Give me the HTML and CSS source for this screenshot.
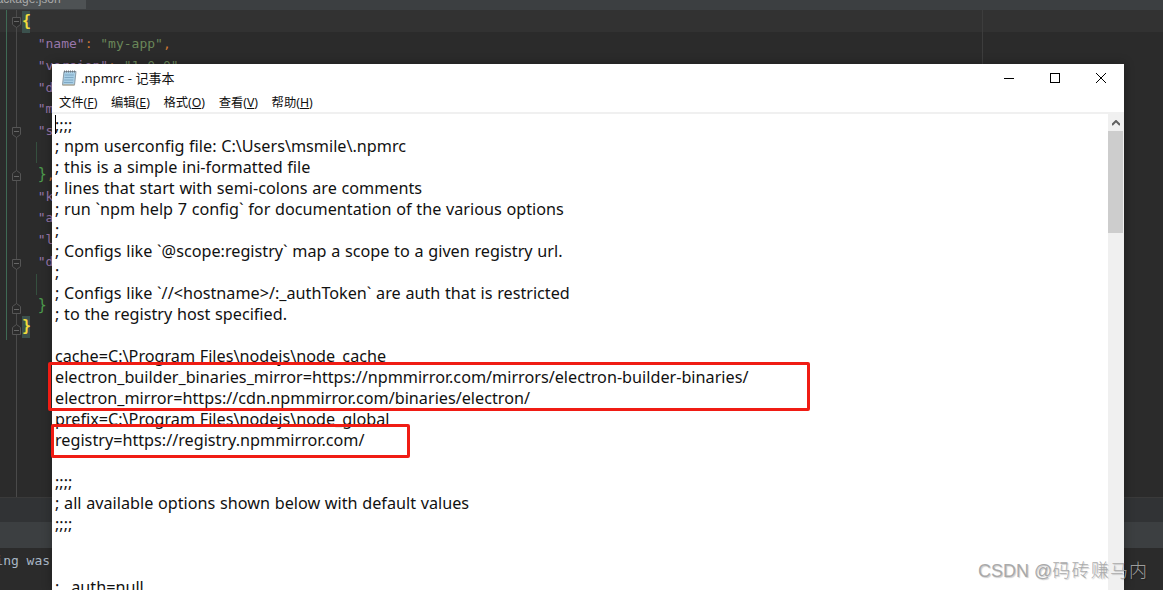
FILE: index.html
```html
<!DOCTYPE html>
<html lang="zh-CN">
<head>
<meta charset="utf-8">
<title>.npmrc - 记事本</title>
<link rel="stylesheet" href="styles.css">
</head>
<body>
<div class="ide">
  <div class="ide-tabs"><div class="ide-tab">package.json</div></div>
  <div class="ide-main">
    <svg class="gutter" viewBox="0 0 40 487" width="40" height="487">
      <path d="M6.5 0V330" stroke="#3f6a55"/>
      <path d="M16.5 0V487" stroke="#4a4a4a"/>
      <path d="M36.5 132v21M36.5 264v21" stroke="#35503f"/>
      <g fill="#2b2b2b" stroke="#555">
        <path d="M12.5 7.5h8v7l-4 3-4-3z"/>
        <path d="M12.5 117.5h8v7l-4 3-4-3z"/>
        <path d="M12.5 170.5v-7l4-3 4 3v7z"/>
        <path d="M12.5 249.5h8v7l-4 3-4-3z"/>
        <path d="M12.5 303.5v-7l4-3 4 3v7z"/>
        <path d="M12.5 324.5v-7l4-3 4 3v7z"/>
      </g>
      <path d="M14 11.5h5M14 121.5h5M14 166.5h5M14 253.5h5M14 299.5h5M14 320.5h5" stroke="#666"/>
    </svg>
    <pre class="code"><span class="brace brace-hl">{</span>
  <span class="key">"name"</span><span class="colon">:</span> <span class="str">"my-app"</span><span class="colon">,</span>
  <span class="key">"version"</span><span class="colon">:</span> <span class="str">"1.0.0"</span><span class="colon">,</span>
  <span class="key">"description"</span>
  <span class="key">"main"</span>
  <span class="key">"scripts"</span>

  <span class="green">}</span><span class="colon">,</span>
  <span class="key">"keywords"</span>
  <span class="key">"author"</span>
  <span class="key">"license"</span>
  <span class="key">"dependencies"</span>

  <span class="green">}</span>
<span class="brace brace-hl">}</span></pre>
  </div>
  <div class="ide-panel-a"></div>
  <div class="ide-panel-b"></div>
  <pre class="ide-log">Nothing was</pre>
</div>

<div class="notepad">
  <div class="np-title">
    <svg class="np-icon" viewBox="0 0 18 18" width="18" height="18">
      <path d="M4 2.5h12l-1.5 13.5h-12z" fill="#a9cfe6" stroke="#8b9aa5"/>
      <path d="M4 2.5h12" stroke="#6d7780" stroke-width="2" stroke-dasharray="1 1"/>
      <path d="M4.8 6h9M4.5 8.5h9M4.2 11h9M3.9 13.5h9" stroke="#7fa8c4"/>
      <path d="M2.5 16h12" stroke="#b8a98c"/>
    </svg>
    <span class="np-name">.npmrc - 记事本</span>
    <div class="np-controls">
      <svg viewBox="0 0 46 27" width="46" height="27"><path d="M18 14.5h10" stroke="#000"/></svg>
      <svg viewBox="0 0 46 27" width="46" height="27"><rect x="18.5" y="9.5" width="9" height="9" fill="none" stroke="#000"/></svg>
      <svg viewBox="0 0 46 27" width="46" height="27"><path d="M18 9l10 10M28 9l-10 10" stroke="#000"/></svg>
    </div>
  </div>
  <div class="np-menu">
    <span>文件(<u>F</u>)</span><span>编辑(<u>E</u>)</span><span>格式(<u>O</u>)</span><span>查看(<u>V</u>)</span><span>帮助(<u>H</u>)</span>
  </div>
  <div class="np-body">
    <div class="np-text">
<pre class="np-pre">;;;;
; npm userconfig file: C:\Users\msmile\.npmrc
; this is a simple ini-formatted file
; lines that start with semi-colons are comments
; run `npm help 7 config` for documentation of the various options
;
; Configs like `@scope:registry` map a scope to a given registry url.
;
; Configs like `//&lt;hostname&gt;/:_authToken` are auth that is restricted
; to the registry host specified.

cache=C:\Program Files\nodejs\node_cache
electron_builder_binaries_mirror=https://npmmirror.com/mirrors/electron-builder-binaries/
electron_mirror=https://cdn.npmmirror.com/binaries/electron/
prefix=C:\Program Files\nodejs\node_global
registry=https://registry.npmmirror.com/

;;;;
; all available options shown below with default values
;;;;


; _auth=null</pre>
      <span class="caret"></span>
    </div>
    <div class="np-scroll">
      <div class="np-arrow"><svg viewBox="0 0 8 6" width="8" height="6"><path d="M0 5l4-4 4 4" fill="none" stroke="#606060" stroke-width="2"/></svg></div>
      <div class="np-thumb"></div>
    </div>
  </div>
</div>

<div class="mark mark-a"></div>
<div class="mark mark-b"></div>
<div class="watermark">CSDN @<span class="watermark-cjk">码砖赚马内</span></div>
</body>
</html>
```
FILE: styles.css
```css
* { box-sizing: border-box; }
html, body { margin: 0; height: 100%; }
body {
  background: #2b2b2b;
  overflow: hidden;
  position: relative;
  width: 1163px;
  height: 590px;
}
pre { margin: 0; }

.ide { height: 590px; display: flex; flex-direction: column; }
.ide-tabs { height: 10px; background: #3c3f41; overflow: hidden; flex: none; }
.ide-tab {
  width: 86px; height: 17px; margin-top: -8px; background: #4e5254; color: #a9a9a9;
  font: 12px/14px "Liberation Sans", sans-serif; text-indent: -10px; overflow: hidden;
}
.ide-main {
  position: relative; height: 487px; flex: none; display: flex;
  background: linear-gradient(#323232 0 22px, #2b2b2b 22px);
}
.gutter { position: absolute; left: 0; top: 0; }
.code {
  flex: 1; font: 13px/21.8px "DejaVu Sans Mono", monospace; color: #a9b7c6;
  padding: 1px 0 0 22px; position: relative;
  background: linear-gradient(to right, transparent 982px, #3d3d3d 982px 983px, transparent 983px);
}
.brace { color: #f0dc3c; font-weight: bold; font-size: 15px; }
.brace-hl { background: #3b514d; display: inline-block; width: 8px; height: 22px; }
.key { color: #9876aa; }
.str { color: #6a8759; }
.colon { color: #cc7832; }
.green { color: #4d9c4d; font-size: 15px; }
.ide-panel-a { height: 25px; flex: none; background: #313335; border-top: 1px solid #3a3a3a; }
.ide-panel-b { height: 26px; flex: none; background: #3c3f41; }
.ide-log {
  font: 13px/1 "DejaVu Sans Mono", monospace; color: #a9b7c6;
  padding-top: 6px; margin-left: -36px;
}

.notepad {
  position: absolute; left: 52px; top: 64px; width: 1072px; height: 526px;
  background: #fff; display: flex; flex-direction: column;
  box-shadow: 0 0 10px rgba(0,0,0,.3);
}
.np-title {
  height: 27px; flex: none; display: flex; align-items: center; padding-left: 8px;
}
.np-icon { flex: none; margin-right: 3px; }
.np-name { font: 13px "Noto Sans", "Noto Sans CJK SC", sans-serif; color: #111; letter-spacing: .05px; }
.np-controls { margin-left: auto; display: flex; }
.np-menu {
  height: 21px; flex: none; display: flex; gap: 13.6px; padding: 3px 0 0 7px;
  font: 12.3px/17px "Noto Sans", "Noto Sans CJK SC", sans-serif; color: #111;
}
.np-body {
  flex: 1; min-height: 0; display: flex; border-top: 2px solid #f0f0f0;
}
.np-text { flex: 1; position: relative; overflow: hidden; padding: 1px 0 0 3px; }
.np-pre {
  font: 16.2px/21px "Noto Sans", "Noto Sans CJK SC", sans-serif; color: #111;
  word-spacing: .5px;
}
.caret { position: absolute; left: 3px; top: 1px; width: 1px; height: 19px; background: #000; }
.np-scroll { width: 16px; flex: none; background: #f0f0f0; }
.np-arrow { height: 17px; display: flex; align-items: center; justify-content: center; }
.np-thumb { height: 102px; width: 15px; background: #cdcdcd; }

.mark { position: absolute; border: 3px solid #f01c14; border-radius: 2px; }
.mark-a { left: 48px; top: 362px; width: 762px; height: 49px; }
.mark-b { left: 51px; top: 424px; width: 359px; height: 34px; }
.watermark {
  position: absolute; left: 978px; top: 559px;
  font: 18px/24px "Liberation Sans", "Noto Sans CJK SC", sans-serif;
  color: rgba(165,165,165,.95); text-shadow: 1px 1px 1px rgba(0,0,0,.2);
  white-space: nowrap;
}
.watermark-cjk { letter-spacing: 1.2px; font-weight: 300; }
```
